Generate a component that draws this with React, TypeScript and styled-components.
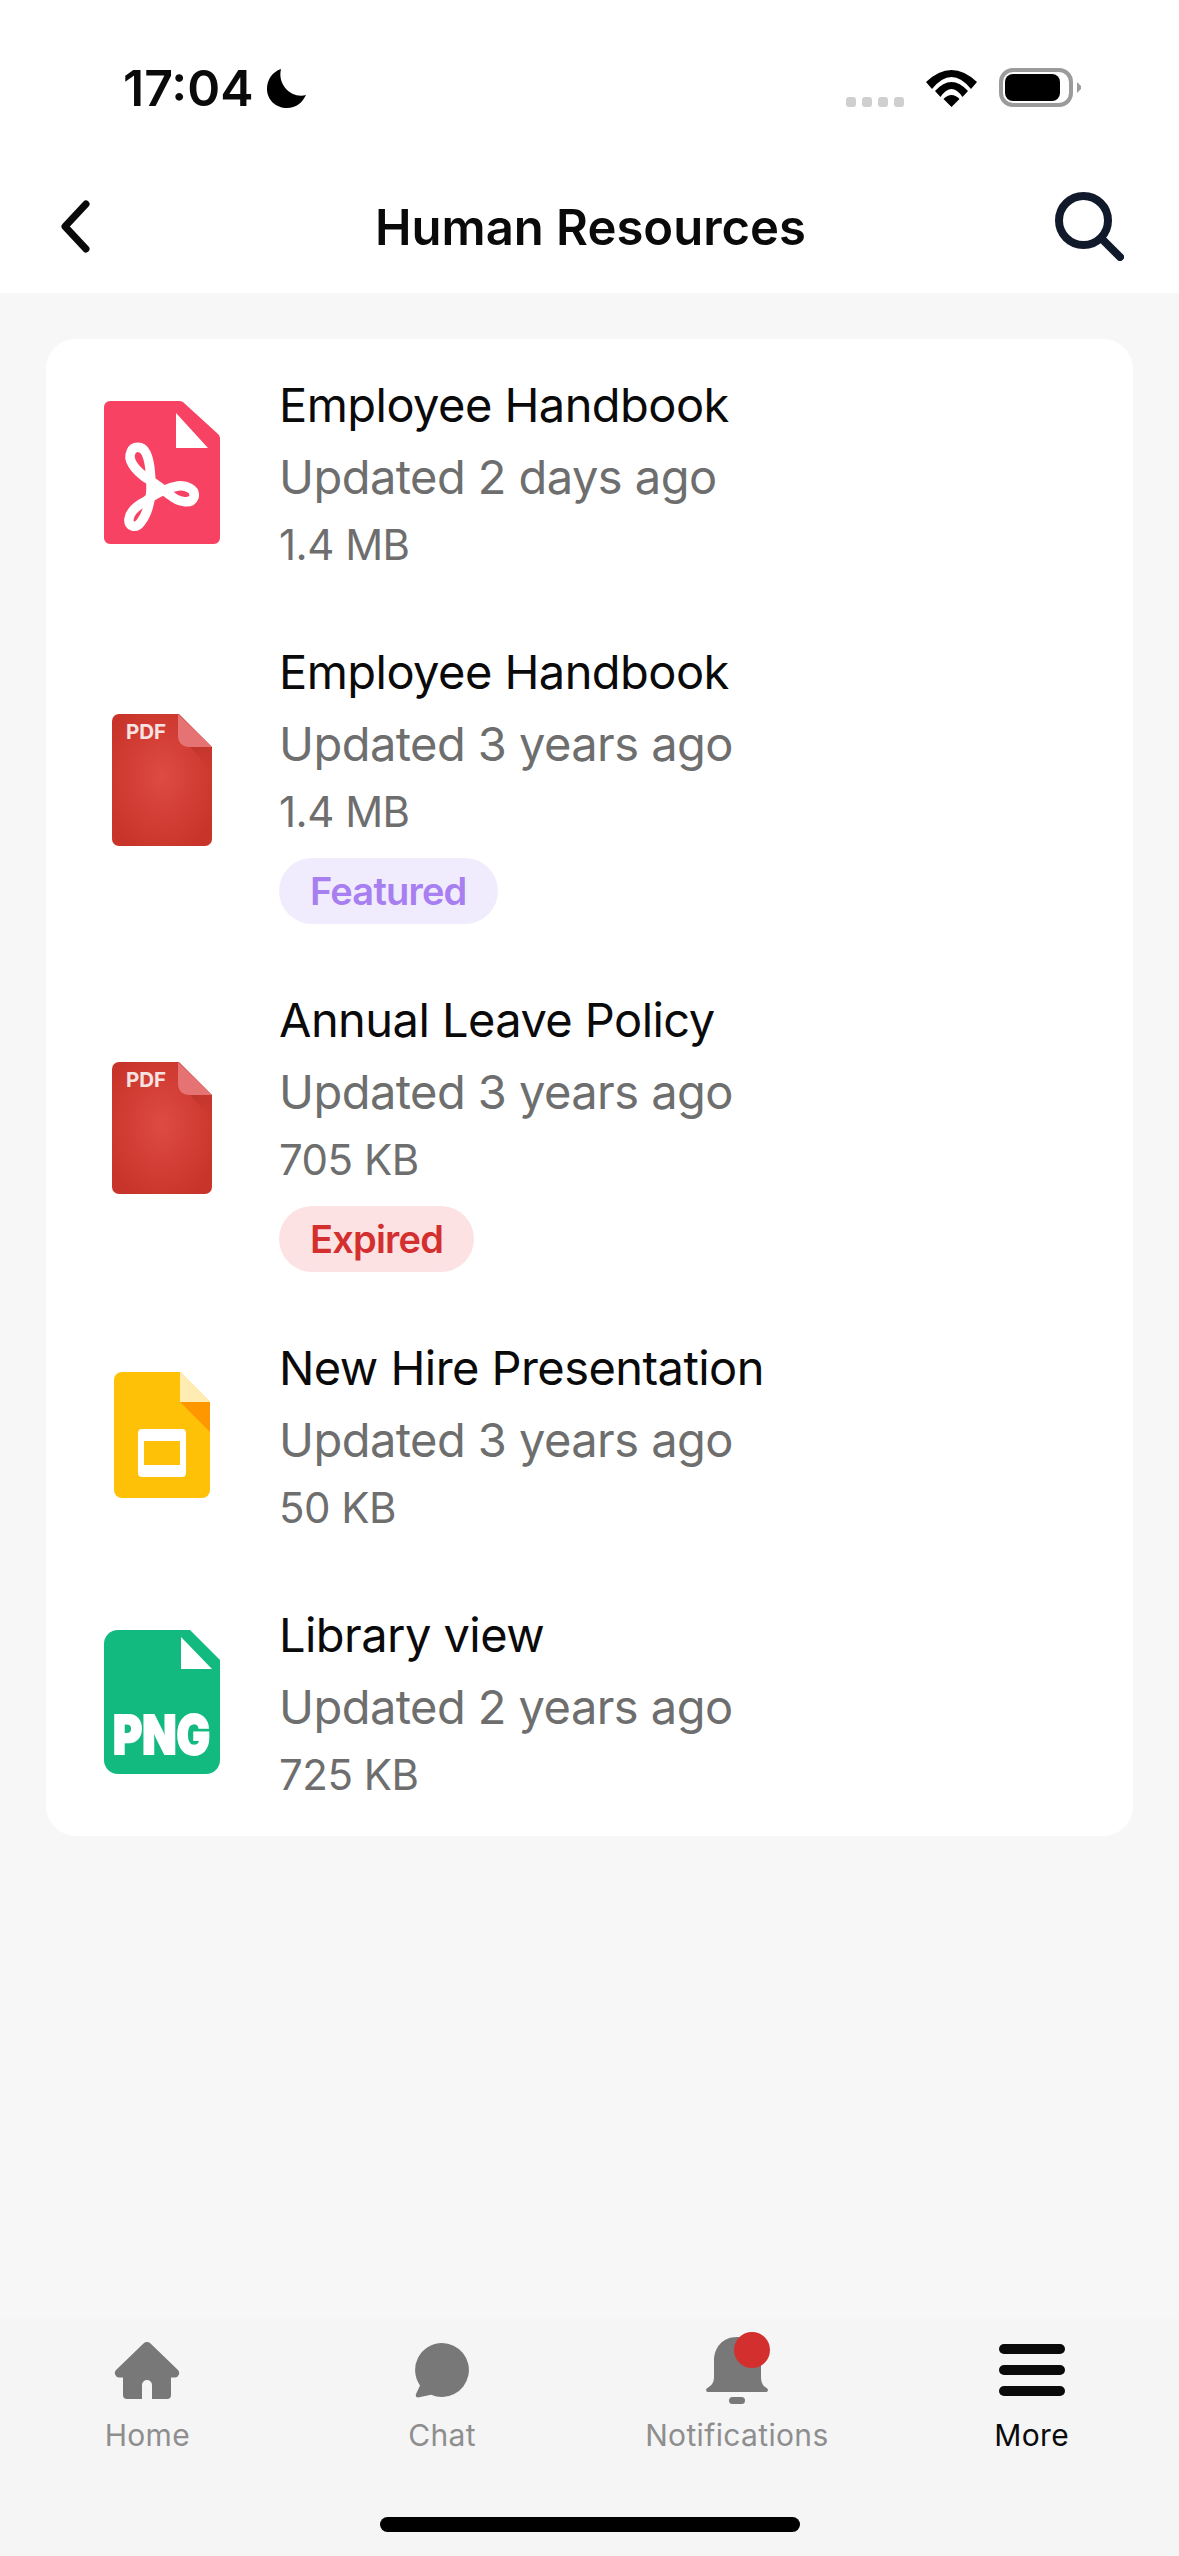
import React from "react";
import styled, { createGlobalStyle } from "styled-components";

const Global = createGlobalStyle`
  html, body { margin: 0; padding: 0; background: #f7f7f7; }
  * { box-sizing: border-box; }
  body { font-family: Inter, "Liberation Sans", sans-serif; }
`;

const Page = styled.div`
  width: 1179px;
  height: 2556px;
  display: flex;
  flex-direction: column;
  background: #f7f7f7;
  overflow: hidden;
`;

const Top = styled.header`
  background: #ffffff;
  flex: none;
`;

const StatusBar = styled.div`
  height: 160px;
  padding: 60px 98px 0 123px;
  display: flex;
  justify-content: space-between;
  align-items: flex-start;
`;

const StatusLeft = styled.div`
  display: flex;
  align-items: center;
  gap: 13px;
  height: 56px;
`;

const Time = styled.span`
  font-size: 50px;
  font-weight: 600;
  line-height: 56px;
  color: #0a0a0a;
`;

const StatusRight = styled.div`
  display: flex;
  align-items: flex-end;
  gap: 22px;
  height: 47px;
`;

const SignalDots = styled.div`
  display: flex;
  gap: 6px;
`;

const SignalDot = styled.span`
  width: 10px;
  height: 10px;
  border-radius: 3px;
  background: #cfcfcf;
`;

const NavHeader = styled.div`
  height: 133px;
  padding: 0 55px 0 60px;
  display: grid;
  grid-template-columns: 1fr auto 1fr;
  align-items: center;
`;

const HeaderTitle = styled.h1`
  margin: 2px 3px 0 0;
  font-size: 49px;
  font-weight: 600;
  line-height: 60px;
  color: #0a0a0a;
`;

const SearchSlot = styled.div`
  justify-self: end;
  display: flex;
`;

const BackSlot = styled.div`
  display: flex;
`;

const Main = styled.main`
  flex: 1;
  padding: 46px 46px 0;
`;

const Card = styled.section`
  background: #ffffff;
  border-radius: 30px;
  padding: 30px 46px 29px 58px;
  display: flex;
  flex-direction: column;
  gap: 59px;
`;

const Row = styled.article`
  display: flex;
  align-items: center;
  gap: 59px;
`;

const IconSlot = styled.div`
  flex: none;
  width: 116px;
  padding-bottom: 2px;
  display: flex;
  justify-content: center;
`;

const Info = styled.div`
  display: flex;
  flex-direction: column;
  align-items: flex-start;
`;

const Title = styled.div`
  font-size: 47px;
  letter-spacing: -0.55px;
  line-height: 72px;
  color: #0a0a0a;
`;

const Updated = styled.div`
  font-size: 47px;
  letter-spacing: -0.55px;
  line-height: 72px;
  color: #6e6e6e;
`;

const Size = styled.div`
  font-size: 42px;
  letter-spacing: -0.5px;
  line-height: 64px;
  color: #6e6e6e;
`;

const Tag = styled.span<{ $bg: string; $fg: string }>`
  margin: 14px 0 1px;
  height: 66px;
  padding: 0 31px;
  border-radius: 33px;
  display: flex;
  align-items: center;
  font-size: 38px;
  letter-spacing: -0.8px;
  font-weight: 600;
  background: ${(p) => p.$bg};
  color: ${(p) => p.$fg};
`;

const BottomBar = styled.footer`
  flex: none;
  background: #f5f5f5;
  padding-top: 15px;
`;

const Tabs = styled.nav`
  display: grid;
  grid-template-columns: repeat(4, 1fr);
`;

const Tab = styled.div`
  display: flex;
  flex-direction: column;
  align-items: center;
`;

const TabIcon = styled.div`
  position: relative;
  height: 72px;
  display: flex;
  align-items: center;
`;

const TabLabel = styled.span<{ $active?: boolean }>`
  margin-top: 11px;
  font-size: 30px;
  letter-spacing: 0.35px;
  line-height: 36px;
  color: ${(p) => (p.$active ? "#0a0a0a" : "#8e8e8e")};
`;

const Badge = styled.span`
  position: absolute;
  left: 28px;
  top: -2px;
  width: 36px;
  height: 36px;
  border-radius: 50%;
  background: #d32f2f;
`;

const HomeIndicator = styled.div`
  width: 420px;
  height: 15px;
  margin: 64px auto 24px;
  border-radius: 8px;
  background: #000000;
`;

const MoonIcon = () => (
  <svg width="39" height="39" viewBox="0 0 39 39">
    <path d="M14 0C5 3 0 11 0 20C0 31 9 39 20 39C29 39 35 34 39 26C26 30 10 17 14 0Z" fill="#000" />
  </svg>
);

const WifiIcon = () => (
  <svg width="51" height="37" viewBox="0 0 51 37">
    <path d="M0 12Q25.5 -12 51 12L45 19Q25.5 -5 6 19Z" fill="#000" />
    <path d="M9 21Q25.5 3 42 21L36.5 27Q25.5 11 14.5 27Z" fill="#000" />
    <path d="M17.5 29Q25.5 21 33.5 29L25.5 37Z" fill="#000" />
  </svg>
);

const BatteryIcon = () => (
  <svg width="82" height="39" viewBox="0 0 82 39">
    <rect x="2" y="2" width="70" height="35" rx="12" fill="none" stroke="#9b9b9b" strokeWidth="4" />
    <rect x="6" y="6" width="55" height="27" rx="8" fill="#000" />
    <path d="M78 14L82 18V21L78 25Z" fill="#9b9b9b" />
  </svg>
);

const BackIcon = () => (
  <svg width="30" height="53" viewBox="0 0 30 53">
    <path d="M26 4L5 26.5L26 49" fill="none" stroke="#0a0a0a" strokeWidth="7" strokeLinecap="round" strokeLinejoin="round" />
  </svg>
);

const SearchIcon = () => (
  <svg width="69" height="69" viewBox="0 0 69 69">
    <circle cx="28.5" cy="28.5" r="24.5" fill="none" stroke="#111a2b" strokeWidth="8" />
    <path d="M47 47L65 65" stroke="#111a2b" strokeWidth="8" strokeLinecap="round" />
  </svg>
);

const AcrobatIcon = () => (
  <svg width="116" height="143" viewBox="0 0 116 143">
    <path d="M6 0H76a5 5 0 0 1 3.5 1.5L114 33a6 6 0 0 1 2 4V137a6 6 0 0 1 -6 6H6a6 6 0 0 1 -6 -6V6a6 6 0 0 1 6 -6Z" fill="#f74263" />
    <path d="M72 12V47H104Z" fill="#fff" />
    <path
      d="M26 57C28 67 40 76 47 80C54 84 60 90 66 94C74 101 87 104 90 96C92 88 82 84 74 85C68 86 62 88 58 90C52 93 46 96 42 100C34 104 26 110 25 118C24 126 32 128 37 121C43 113 47 100 47 88C47 74 46 60 42 52C38 44 29 45 27 51C26 53 26 55 26 57Z"
      fill="none"
      stroke="#fff"
      strokeWidth="9.5"
      strokeLinejoin="round"
    />
  </svg>
);

const PdfIcon = ({ id }: { id: string }) => (
  <svg width="100" height="132" viewBox="0 0 100 132">
    <defs>
      <radialGradient id={id} cx="0.5" cy="0.47" r="0.6">
        <stop offset="0" stopColor="#de4b43" />
        <stop offset="1" stopColor="#c9342a" />
      </radialGradient>
      <linearGradient id={`${id}s`} x1="0" y1="0" x2="1" y2="1">
        <stop offset="0" stopColor="#a82f27" />
        <stop offset="1" stopColor="#c9342a" stopOpacity="0" />
      </linearGradient>
    </defs>
    <path d="M7 0H67L100 33V125a7 7 0 0 1 -7 7H7a7 7 0 0 1 -7 -7V7a7 7 0 0 1 7 -7Z" fill={`url(#${id})`} />
    <path d="M67 20Q68 33 82 33H100V58Z" fill={`url(#${id}s)`} />
    <path d="M66 0L100 33H78Q66 33 66 21Z" fill="#e57373" />
    <text x="14" y="25" fontFamily="Inter, sans-serif" fontWeight="700" fontSize="20.5" fill="#f6e3e1">PDF</text>
  </svg>
);

const SlidesIcon = () => (
  <svg width="96" height="126" viewBox="0 0 96 126">
    <path d="M8 0H66L96 30V118a8 8 0 0 1 -8 8H8a8 8 0 0 1 -8 -8V8a8 8 0 0 1 8 -8Z" fill="#ffc107" />
    <path d="M66 30H96V60Z" fill="#ff9800" />
    <path d="M66 0L96 30H66Z" fill="#ffecb3" />
    <path fillRule="evenodd" d="M28 57H68a4 4 0 0 1 4 4V101a4 4 0 0 1 -4 4H28a4 4 0 0 1 -4 -4V61a4 4 0 0 1 4 -4ZM30 69V93H66V69Z" fill="#fff" />
  </svg>
);

const PngIcon = () => (
  <svg width="116" height="144" viewBox="0 0 116 144">
    <path d="M14 0H86L116 30V130a14 14 0 0 1 -14 14H14a14 14 0 0 1 -14 -14V14a14 14 0 0 1 14 -14Z" fill="#13ba80" />
    <path d="M77 7V39H108Z" fill="#fff" />
    <text x="9" y="124" fontFamily="Inter, sans-serif" fontWeight="900" fontSize="54" fill="#fff" stroke="#fff" strokeWidth="2" textLength="97" lengthAdjust="spacingAndGlyphs">PNG</text>
  </svg>
);

const HomeIcon = () => (
  <svg width="66" height="57" viewBox="0 0 66 57">
    <path d="M29.5 1.5a5 5 0 0 1 7 0L64 28a4.5 4.5 0 0 1 -3 7.5H57V53a4 4 0 0 1 -4 4H38V43a5 5 0 0 0 -10 0V57H13a4 4 0 0 1 -4 -4V35.5H5a4.5 4.5 0 0 1 -3 -7.5Z" fill="#787878" />
  </svg>
);

const ChatIcon = () => (
  <svg width="54" height="55" viewBox="0 0 54 55">
    <path d="M27 0A27 27 0 1 1 16 51.7L3 54.5Q0 54.5 1 51L5 42.5A27 27 0 0 1 27 0Z" fill="#787878" />
  </svg>
);

const BellIcon = () => (
  <svg width="62" height="67" viewBox="0 0 62 67">
    <path d="M31 0C16 0 8 11 8 24V40C8 46 5 49 2 50.5Q0 51.5 0 53Q0 55 2 55H60Q62 55 62 53Q62 51.5 60 50.5C57 49 55 46 55 40V24C55 11 46 0 31 0Z" fill="#787878" />
    <rect x="23" y="60" width="16" height="7" rx="3.5" fill="#787878" />
  </svg>
);

const MenuIcon = () => (
  <svg width="66" height="52" viewBox="0 0 66 52">
    <rect y="0" width="66" height="10" rx="5" fill="#0a0a0a" />
    <rect y="21" width="66" height="10" rx="5" fill="#0a0a0a" />
    <rect y="42" width="66" height="10" rx="5" fill="#0a0a0a" />
  </svg>
);

const files = [
  { icon: <AcrobatIcon />, title: "Employee Handbook", updated: "Updated 2 days ago", size: "1.4 MB" },
  { icon: <PdfIcon id="pdfa" />, title: "Employee Handbook", updated: "Updated 3 years ago", size: "1.4 MB", tag: { text: "Featured", bg: "#f1ecfd", fg: "#a77ff0" } },
  { icon: <PdfIcon id="pdfb" />, title: "Annual Leave Policy", updated: "Updated 3 years ago", size: "705 KB", tag: { text: "Expired", bg: "#fde2e4", fg: "#d32f2f" } },
  { icon: <SlidesIcon />, title: "New Hire Presentation", updated: "Updated 3 years ago", size: "50 KB" },
  { icon: <PngIcon />, title: "Library view", updated: "Updated 2 years ago", size: "725 KB" },
];

export default function App() {
  return (
    <Page>
      <Global />
      <Top>
        <StatusBar>
          <StatusLeft>
            <Time>17:04</Time>
            <MoonIcon />
          </StatusLeft>
          <StatusRight>
            <SignalDots>
              <SignalDot />
              <SignalDot />
              <SignalDot />
              <SignalDot />
            </SignalDots>
            <WifiIcon />
            <BatteryIcon />
          </StatusRight>
        </StatusBar>
        <NavHeader>
          <BackSlot>
            <BackIcon />
          </BackSlot>
          <HeaderTitle>Human Resources</HeaderTitle>
          <SearchSlot>
            <SearchIcon />
          </SearchSlot>
        </NavHeader>
      </Top>
      <Main>
        <Card>
          {files.map((f, i) => (
            <Row key={i}>
              <IconSlot>{f.icon}</IconSlot>
              <Info>
                <Title>{f.title}</Title>
                <Updated>{f.updated}</Updated>
                <Size>{f.size}</Size>
                {f.tag && (
                  <Tag $bg={f.tag.bg} $fg={f.tag.fg}>
                    {f.tag.text}
                  </Tag>
                )}
              </Info>
            </Row>
          ))}
        </Card>
      </Main>
      <BottomBar>
        <Tabs>
          <Tab>
            <TabIcon>
              <HomeIcon />
            </TabIcon>
            <TabLabel>Home</TabLabel>
          </Tab>
          <Tab>
            <TabIcon>
              <ChatIcon />
            </TabIcon>
            <TabLabel>Chat</TabLabel>
          </Tab>
          <Tab>
            <TabIcon>
              <BellIcon />
              <Badge />
            </TabIcon>
            <TabLabel>Notifications</TabLabel>
          </Tab>
          <Tab>
            <TabIcon>
              <MenuIcon />
            </TabIcon>
            <TabLabel $active>More</TabLabel>
          </Tab>
        </Tabs>
        <HomeIndicator />
      </BottomBar>
    </Page>
  );
}
